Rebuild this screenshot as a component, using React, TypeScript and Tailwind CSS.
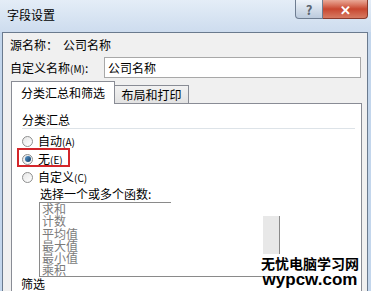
const Radio = ({ checked }: { checked?: boolean }) => (
  <span className="relative flex h-[11px] w-[11px] items-center justify-center rounded-full border border-[#8e8f8f] bg-gradient-to-br from-[#e6e6e6] to-[#ffffff]">
    {checked && (
      <span className="h-[6px] w-[6px] rounded-full bg-gradient-to-br from-[#5a9ad0] to-[#0d3a63]" />
    )}
  </span>
);

const App = () => {
  const items = ["求和", "计数", "平均值", "最大值", "最小值", "乘积"];

  return (
    <div className="relative flex h-[291px] w-[371px] flex-col overflow-hidden bg-[#c3d6ec] font-['Noto_Sans_CJK_SC',sans-serif] text-[12px] text-black">
      {/* title bar */}
      <div className="flex h-[32px] shrink-0 items-start bg-gradient-to-b from-[#e4edf7] to-[#cddcee]">
        <div className="pl-[7px] pt-[7px] text-[12px] leading-[16px]">字段设置</div>
        <div className="ml-auto mr-[3px] flex h-[19px]">
          <div className="flex w-[28px] items-center justify-center rounded-bl-[4px] border border-t-0 border-[#6e7d91] bg-gradient-to-b from-[#eef3f9] to-[#bccbdd] text-[13px] font-bold leading-none text-[#5b6470]">
            ?
          </div>
          <div className="flex w-[45px] items-center justify-center rounded-br-[4px] border border-l-0 border-t-0 border-[#8a3a2c] bg-gradient-to-b from-[#e9a897] via-[#c8462f] to-[#d67a62] text-[13px] font-bold leading-none text-white">
            ✕
          </div>
        </div>
      </div>

      {/* client area */}
      <div className="ml-[2px] mr-[3px] flex flex-1 flex-col border-l border-r border-t border-[#6a7a8e] bg-[#f0f0f0]">
        <div className="mt-[2px] flex h-[20px] items-center pl-[7px]">
          <span>源名称：</span>
          <span className="ml-[5px]">公司名称</span>
        </div>
        <div className="mt-[2px] flex items-center">
          <div className="w-[101px] pl-[7px]">
            自定义名称<span className="text-[10px]">(M)</span>:
          </div>
          <div className="flex h-[21px] w-[257px] items-center border border-[#a8a8a8] bg-white pl-[3px]">
            公司名称
          </div>
        </div>

        {/* tabs */}
        <div className="ml-[8px] mt-[3px] flex items-end">
          <div className="relative z-10 -mb-px flex h-[23px] w-[104px] items-center justify-center border border-b-0 border-[#898c95] bg-white">
            分类汇总和筛选
          </div>
          <div className="flex h-[18px] w-[74px] items-center justify-center border border-b-0 border-l-0 border-[#898c95] bg-gradient-to-b from-[#f2f2f2] to-[#e2e2e2]">
            布局和打印
          </div>
        </div>

        <div className="ml-[8px] flex w-[351px] flex-1 flex-col border border-[#898c95] bg-white">
          <div className="pl-[10px] pt-[8px] leading-[16px]">分类汇总</div>
          <div className="ml-[10px] mr-[6px] h-px bg-[#dde3e8]" />

          <div className="mt-[3px] flex h-[18px] items-center pl-[10px]">
            <Radio />
            <span className="ml-[5px]">
              自动<span className="text-[10px]">(A)</span>
            </span>
          </div>
          <div className="relative flex h-[18px] items-center pl-[10px]">
            <Radio checked />
            <span className="ml-[5px]">
              无<span className="text-[10px]">(E)</span>
            </span>
            <span className="absolute left-[5px] top-[-2px] h-[19px] w-[53px] border-2 border-[#d3262b]" />
          </div>
          <div className="flex h-[18px] items-center pl-[10px]">
            <Radio />
            <span className="ml-[5px]">
              自定义<span className="text-[10px]">(C)</span>
            </span>
          </div>
          <div className="pl-[28px] leading-[16px]">选择一个或多个函数:</div>

          <div className="relative ml-[27px] flex h-[75px] w-[241px] border-b border-l border-[#8a8a8a]">
            <div className="absolute left-0 top-0 h-px w-[131px] bg-[#8a8a8a]" />
            <div className="flex flex-1 flex-col pl-[2px] pt-[1px] text-[12px] leading-[12.3px] text-[#7b7b7b]">
              {items.map((it) => (
                <div key={it}>{it}</div>
              ))}
            </div>
            <div className="mt-[14px] h-[38px] w-[17px] border-r border-[#8a8a8a] bg-[#e8e8e8]" />
          </div>

          <div className="pl-[9px] leading-[14px]">筛选</div>
        </div>
      </div>

      {/* watermark */}
      <div className="absolute left-[260px] top-[255px] flex w-[100px] flex-col items-center whitespace-nowrap font-bold text-black [text-shadow:0_0_2px_#fff,0_0_2px_#fff]">
        <div className="text-[14px] leading-[17px]">无忧电脑学习网</div>
        <div className="font-['Liberation_Sans',sans-serif] text-[17px] leading-[15px]">wypcw.com</div>
      </div>
    </div>
  );
};

export default App;
